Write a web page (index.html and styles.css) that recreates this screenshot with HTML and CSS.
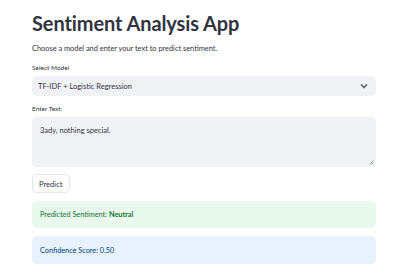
FILE: index.html
```html
<!DOCTYPE html>
<html lang="en">
<head>
  <meta charset="UTF-8">
  <meta name="viewport" content="width=device-width, initial-scale=1">
  <title>Sentiment Analysis App</title>
  <link rel="stylesheet" href="styles.css">
</head>
<body>
  <div class="main">
    <h1>Sentiment Analysis App</h1>
    <p class="intro">Choose a model and enter your text to predict sentiment.</p>

    <label class="field-label">Select Model</label>
    <div class="select">
      <span>TF-IDF + Logistic Regression</span>
      <svg class="chevron" width="8" height="6" viewBox="0 0 8 6">
        <path d="M1 1.5 L4 4.5 L7 1.5" fill="none" stroke="#555" stroke-width="1.3"/>
      </svg>
    </div>

    <label class="field-label">Enter Text:</label>
    <div class="textarea">
      <span>3ady, nothing special.</span>
      <svg class="grip" width="5" height="5" viewBox="0 0 5 5">
        <path d="M4.5 0.5 L0.5 4.5 M4.5 2.5 L2.5 4.5" stroke="#888" stroke-width="0.8"/>
      </svg>
    </div>

    <button class="btn">Predict</button>

    <div class="alert success"><span>Predicted Sentiment: <b>Neutral</b></span></div>
    <div class="alert info"><span>Confidence Score: 0.50</span></div>
  </div>
</body>
</html>
```

FILE: styles.css
```css
body {
  margin: 0;
  font-family: "Source Sans Pro", Lato, "Liberation Sans", sans-serif;
  color: #31333f;
  background: #fff;
}
.main {
  padding: 8px 24px 0 32px;
}
h1 {
  margin: 0;
  font-size: 20px;
  font-weight: 700;
  line-height: 30px;
  letter-spacing: -0.1px;
}
.intro {
  margin: 5px 0 0;
  font-size: 7.4px;
  line-height: 12px;
}
.field-label {
  display: block;
  margin-top: 8px;
  font-size: 6.5px;
  line-height: 10px;
}
.select {
  margin-top: 3px;
  height: 20px;
  background: #f0f2f6;
  border-radius: 5px;
  display: flex;
  align-items: center;
  justify-content: space-between;
  padding: 0 8px 0 6px;
  font-size: 7.5px;
}
.textarea {
  margin-top: 3px;
  height: 50px;
  background: #f0f2f6;
  border-radius: 5px;
  position: relative;
  padding: 9px 8px 0;
  box-sizing: border-box;
  font-size: 7.5px;
}
.grip {
  position: absolute;
  right: 2px;
  bottom: 2px;
}
.btn {
  display: block;
  margin-top: 7px;
  height: 19px;
  padding: 0 6px;
  font-family: inherit;
  font-size: 7.6px;
  color: #31333f;
  background: #fff;
  border: 1px solid #e4e5e9;
  border-radius: 5px;
}
.alert {
  margin-top: 8px;
  height: 27px;
  border-radius: 5px;
  display: flex;
  align-items: center;
  padding: 0 8px;
  font-size: 7.3px;
}
.success {
  background: #e9f9ee;
  color: #177233;
}
.info {
  margin-top: 8px;
  height: 28px;
  background: #e8f2fc;
  color: #004280;
}
```
